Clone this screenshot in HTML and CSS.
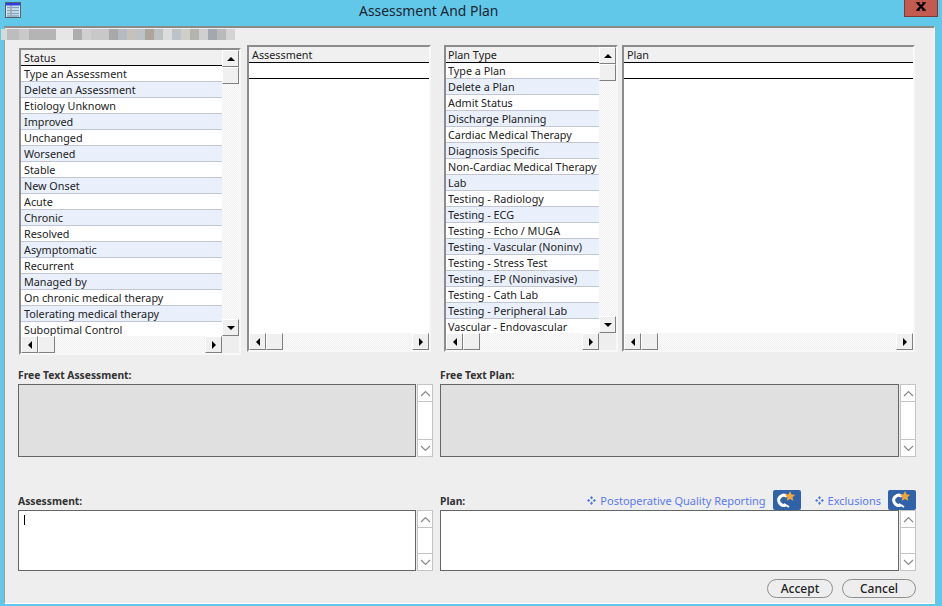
FILE: index.html
```html
<!DOCTYPE html>
<html lang="en">
<head>
    <meta charset="UTF-8">
    <title>Assessment And Plan</title>
    <link rel="stylesheet" href="styles.css">
</head>
<body>
    <div class="titlebar">
        <svg class="app-icon" width="16" height="16" viewBox="0 0 16 16">
            <rect x="0.5" y="0.5" width="15" height="15" fill="#dfe8f2" stroke="#55606c"/>
            <rect x="1" y="1" width="14" height="2.5" fill="#2f3fe0"/>
            <path d="M2 5.5h3M2 8.5h3M2 11.5h3M2 14h3M7 5.5h7M7 8.5h7M7 11.5h7M7 14h7" stroke="#7ea2c4" stroke-width="1.4"/>
            <path d="M6 3v12" stroke="#66707c"/>
        </svg>
        <div class="title">Assessment And Plan</div>
        <div class="close">
            <svg width="10" height="9" viewBox="0 0 10 9"><path d="M1.5 1l7 7M8.5 1l-7 7" stroke="#000" stroke-width="2.2"/><path d="M0 .8h4M6 .8h4M0 8.2h4M6 8.2h4" stroke="#000" stroke-width="1"/></svg>
        </div>
    </div>

    <div class="form">
        <div class="blurred"></div>

        <div class="lists">
            <div class="listbox status-box">
                <div class="list-body">
                    <div class="list-head">Status</div>
                    <div class="row">Type an Assessment</div>
                    <div class="row">Delete an Assessment</div>
                    <div class="row">Etiology Unknown</div>
                    <div class="row">Improved</div>
                    <div class="row">Unchanged</div>
                    <div class="row">Worsened</div>
                    <div class="row">Stable</div>
                    <div class="row">New Onset</div>
                    <div class="row">Acute</div>
                    <div class="row">Chronic</div>
                    <div class="row">Resolved</div>
                    <div class="row">Asymptomatic</div>
                    <div class="row">Recurrent</div>
                    <div class="row">Managed by</div>
                    <div class="row">On chronic medical therapy</div>
                    <div class="row">Tolerating medical therapy</div>
                    <div class="row">Suboptimal Control</div>
                </div>
                <div class="vscroll">
                    <div class="sbtn"><span class="arrow up"></span></div>
                    <div class="sbtn"></div>
                    <div class="strack"></div>
                    <div class="sbtn"><span class="arrow down"></span></div>
                </div>
                <div class="hscroll">
                    <div class="sbtn"><span class="arrow left"></span></div>
                    <div class="sbtn"></div>
                    <div class="strack"></div>
                    <div class="sbtn"><span class="arrow right"></span></div>
                </div>
            </div>

            <div class="listbox assess-box no-vbar">
                <div class="list-body">
                    <div class="list-head">Assessment</div>
                    <div class="row-empty"></div>
                </div>
                <div class="hscroll">
                    <div class="sbtn"><span class="arrow left"></span></div>
                    <div class="sbtn"></div>
                    <div class="strack"></div>
                    <div class="sbtn"><span class="arrow right"></span></div>
                </div>
            </div>

            <div class="listbox plantype-box">
                <div class="list-body">
                    <div class="list-head">Plan Type</div>
                    <div class="row">Type a Plan</div>
                    <div class="row">Delete a Plan</div>
                    <div class="row">Admit Status</div>
                    <div class="row">Discharge Planning</div>
                    <div class="row">Cardiac Medical Therapy</div>
                    <div class="row">Diagnosis Specific</div>
                    <div class="row">Non-Cardiac Medical Therapy</div>
                    <div class="row">Lab</div>
                    <div class="row">Testing - Radiology</div>
                    <div class="row">Testing - ECG</div>
                    <div class="row">Testing - Echo / MUGA</div>
                    <div class="row">Testing - Vascular (Noninv)</div>
                    <div class="row">Testing - Stress Test</div>
                    <div class="row">Testing - EP (Noninvasive)</div>
                    <div class="row">Testing - Cath Lab</div>
                    <div class="row">Testing - Peripheral Lab</div>
                    <div class="row">Vascular - Endovascular</div>
                </div>
                <div class="vscroll">
                    <div class="sbtn"><span class="arrow up"></span></div>
                    <div class="sbtn"></div>
                    <div class="strack"></div>
                    <div class="sbtn"><span class="arrow down"></span></div>
                </div>
                <div class="hscroll">
                    <div class="sbtn"><span class="arrow left"></span></div>
                    <div class="sbtn"></div>
                    <div class="strack"></div>
                    <div class="sbtn"><span class="arrow right"></span></div>
                </div>
            </div>

            <div class="listbox plan-box no-vbar">
                <div class="list-body">
                    <div class="list-head">Plan</div>
                    <div class="row-empty"></div>
                </div>
                <div class="hscroll">
                    <div class="sbtn"><span class="arrow left"></span></div>
                    <div class="sbtn"></div>
                    <div class="strack"></div>
                    <div class="sbtn"><span class="arrow right"></span></div>
                </div>
            </div>
        </div>

        <div class="text-row free-row">
            <div class="field">
                <div class="label">Free Text Assessment:</div>
                <div class="textbox disabled">
                    <div class="text-area"></div>
                    <div class="mini-scroll">
                        <div class="mini-btn"><svg width="11" height="7" viewBox="0 0 11 7"><path d="M1 6l4.5-4.5L10 6" fill="none" stroke="#8a8a8a" stroke-width="1.2"/></svg></div>
                        <div class="mini-track"></div>
                        <div class="mini-btn"><svg width="11" height="7" viewBox="0 0 11 7"><path d="M1 1l4.5 4.5L10 1" fill="none" stroke="#8a8a8a" stroke-width="1.2"/></svg></div>
                    </div>
                </div>
            </div>
            <div class="field">
                <div class="label">Free Text Plan:</div>
                <div class="textbox disabled">
                    <div class="text-area"></div>
                    <div class="mini-scroll">
                        <div class="mini-btn"><svg width="11" height="7" viewBox="0 0 11 7"><path d="M1 6l4.5-4.5L10 6" fill="none" stroke="#8a8a8a" stroke-width="1.2"/></svg></div>
                        <div class="mini-track"></div>
                        <div class="mini-btn"><svg width="11" height="7" viewBox="0 0 11 7"><path d="M1 1l4.5 4.5L10 1" fill="none" stroke="#8a8a8a" stroke-width="1.2"/></svg></div>
                    </div>
                </div>
            </div>
        </div>

        <div class="text-row entry-row">
            <div class="field">
                <div class="label">Assessment:</div>
                <div class="textbox">
                    <div class="text-area"><span class="caret"></span></div>
                    <div class="mini-scroll">
                        <div class="mini-btn"><svg width="11" height="7" viewBox="0 0 11 7"><path d="M1 6l4.5-4.5L10 6" fill="none" stroke="#8a8a8a" stroke-width="1.2"/></svg></div>
                        <div class="mini-track"></div>
                        <div class="mini-btn"><svg width="11" height="7" viewBox="0 0 11 7"><path d="M1 1l4.5 4.5L10 1" fill="none" stroke="#8a8a8a" stroke-width="1.2"/></svg></div>
                    </div>
                </div>
            </div>
            <div class="field">
                <div class="label-line">
                    <div class="label">Plan:</div>
                    <div class="links">
                        <svg class="bullet" width="9" height="9" viewBox="0 0 9 9"><path d="M4.5 0l1.5 1.7-1.5 1.7L3 1.7zM1.7 3L3.3 4.5 1.7 6 0 4.5zM7.3 3L9 4.5 7.3 6 5.7 4.5zM4.5 5.6L6 7.3 4.5 9 3 7.3z" fill="#4d7be0"/></svg>
                        <a class="link">Postoperative Quality Reporting</a>
                        <svg class="badge" width="28" height="20" viewBox="0 0 28 20">
                            <rect width="28" height="20" rx="2" fill="#2f62a8"/>
                            <path d="M14 6.5A5 5 0 1 0 12.5 15" fill="none" stroke="#fff" stroke-width="3"/>
                            <path d="M11 14l5 3" stroke="#fff" stroke-width="2"/>
                            <path d="M17 1l1.6 3.4 3.6.4-2.7 2.4.8 3.6-3.3-1.9-3.3 1.9.8-3.6-2.7-2.4 3.6-.4z" fill="#f5a733"/>
                        </svg>
                        <svg class="bullet second" width="9" height="9" viewBox="0 0 9 9"><path d="M4.5 0l1.5 1.7-1.5 1.7L3 1.7zM1.7 3L3.3 4.5 1.7 6 0 4.5zM7.3 3L9 4.5 7.3 6 5.7 4.5zM4.5 5.6L6 7.3 4.5 9 3 7.3z" fill="#4d7be0"/></svg>
                        <a class="link">Exclusions</a>
                        <svg class="badge" width="28" height="20" viewBox="0 0 28 20">
                            <rect width="28" height="20" rx="2" fill="#2f62a8"/>
                            <path d="M14 6.5A5 5 0 1 0 12.5 15" fill="none" stroke="#fff" stroke-width="3"/>
                            <path d="M11 14l5 3" stroke="#fff" stroke-width="2"/>
                            <path d="M17 1l1.6 3.4 3.6.4-2.7 2.4.8 3.6-3.3-1.9-3.3 1.9.8-3.6-2.7-2.4 3.6-.4z" fill="#f5a733"/>
                        </svg>
                    </div>
                </div>
                <div class="textbox">
                    <div class="text-area"></div>
                    <div class="mini-scroll">
                        <div class="mini-btn"><svg width="11" height="7" viewBox="0 0 11 7"><path d="M1 6l4.5-4.5L10 6" fill="none" stroke="#8a8a8a" stroke-width="1.2"/></svg></div>
                        <div class="mini-track"></div>
                        <div class="mini-btn"><svg width="11" height="7" viewBox="0 0 11 7"><path d="M1 1l4.5 4.5L10 1" fill="none" stroke="#8a8a8a" stroke-width="1.2"/></svg></div>
                    </div>
                </div>
            </div>
        </div>

        <div class="buttons">
            <button class="pill accept">Accept</button>
            <button class="pill cancel">Cancel</button>
        </div>
    </div>
</body>
</html>
```

FILE: styles.css
```css
html, body {
    margin: 0;
    padding: 0;
}
body {
    width: 942px;
    height: 606px;
    overflow: hidden;
    background: #62c8ea;
    font-family: "Noto Sans", sans-serif;
    font-size: 10.8px;
    color: #222;
}

.titlebar {
    position: relative;
    height: 26px;
}
.app-icon {
    position: absolute;
    left: 5px;
    top: 2px;
}
.title {
    position: absolute;
    left: 359px;
    top: 1px;
    font-size: 13.9px;
    line-height: 20px;
    color: #1c2530;
}
.close {
    position: absolute;
    left: 904px;
    top: 0;
    display: flex;
    justify-content: center;
    width: 34px;
    height: 17px;
    box-sizing: border-box;
    padding-top: 2px;
    border: 1px solid #7c3a36;
    border-top: none;
    background: #c35a50;
}

.form {
    position: relative;
    width: 931px;
    height: 578px;
    margin-left: 4px;
    box-sizing: border-box;
    background: #eeeeee;
    border-top: 2px solid #8a8a8a;
    border-left: 1px solid #a0a0a0;
    border-right: 1px solid #fff;
    border-bottom: 1px solid #fff;
}
.blurred {
    position: absolute;
    left: -4px;
    top: 1px;
    width: 234px;
    height: 11px;
    background: linear-gradient(90deg,
        #d2dbdb 0 6px, #bdbdbd 6px 18px, #c9c9c9 18px 28px, #b4b4b4 28px 55px,
        #e6e6e6 55px 72px, #adadad 72px 81px, #d0d0d0 81px 90px, #c8c8c8 90px 108px,
        #a8a8a8 108px 117px, #b4bac2 117px 126px, #c6c2bb 126px 135px, #bcc2c6 135px 144px,
        #aea49c 144px 153px, #bcc1c4 153px 162px, #dcdcdc 162px 171px, #bcc3c6 171px 180px,
        #cfcfca 180px 189px, #b4b4ae 189px 198px, #cfcfcf 198px 207px, #a2a8ae 207px 216px,
        #bababa 216px 225px, #d4d4d4 225px 234px);
}

.lists {
    display: flex;
    align-items: flex-start;
    margin: 17px 0 0 14px;
}
.listbox {
    display: grid;
    grid-template-columns: 1fr 17px;
    grid-template-rows: 1fr 17px;
    box-sizing: border-box;
    height: 307px;
    border: 2px solid;
    border-color: #8c8c8c #f8f8f8 #f8f8f8 #8c8c8c;
    background: #eeeeee;
}
.status-box {
    width: 222px;
    margin: 3px 6px 0 0;
}
.assess-box {
    width: 184px;
    margin-right: 13px;
}
.plantype-box {
    width: 174px;
    margin-right: 4px;
}
.plan-box {
    width: 293px;
}
.no-vbar {
    grid-template-columns: 1fr;
}

.list-body {
    overflow: hidden;
    min-height: 0;
    background: #fff;
}
.list-head {
    height: 15px;
    line-height: 15px;
    padding-left: 2px;
    background: #f0f0f0;
    border-bottom: 1px solid #000;
}
.status-box .list-head,
.status-box .row,
.assess-box .list-head,
.plan-box .list-head {
    padding-left: 3px;
}
.row {
    height: 15px;
    line-height: 15px;
    padding-left: 2px;
    white-space: nowrap;
    border-bottom: 1px solid #c2c6d4;
}
.row:nth-child(odd) {
    background: #e9effb;
}
.row-empty {
    height: 15px;
    border-bottom: 1px solid #000;
}

.vscroll {
    display: flex;
    flex-direction: column;
    min-height: 0;
}
.hscroll {
    display: flex;
    grid-column: 1;
}
.sbtn {
    flex: 0 0 auto;
    width: 17px;
    height: 17px;
    box-sizing: border-box;
    display: flex;
    align-items: center;
    justify-content: center;
    background: #f0f0f0;
    border: 1px solid;
    border-color: #fff #808080 #808080 #fff;
}
.strack {
    flex: 1;
    background-color: #f4f4f4;
    background-image: repeating-conic-gradient(#f0f0f0 0 25%, #fcfcfc 0 50%);
    background-size: 2px 2px;
}
.arrow {
    width: 0;
    height: 0;
    border: 4px solid transparent;
}
.arrow.up {
    border-bottom-color: #000;
    border-top-width: 0;
}
.arrow.down {
    border-top-color: #000;
    border-bottom-width: 0;
}
.arrow.left {
    border-right-color: #000;
    border-left-width: 0;
}
.arrow.right {
    border-left-color: #000;
    border-right-width: 0;
}

.text-row {
    display: grid;
    grid-template-columns: 415px 476px;
    column-gap: 7px;
    margin-left: 13px;
}
.free-row {
    margin-top: 14px;
}
.entry-row {
    margin-top: 38px;
}
.label {
    height: 15px;
    line-height: 13px;
    font-size: 10.3px;
    font-weight: 700;
    color: #333;
}
.label-line {
    display: flex;
    justify-content: space-between;
    height: 15px;
}
.textbox {
    display: flex;
}
.free-row .textbox {
    height: 73px;
}
.entry-row .textbox {
    height: 61px;
}
.text-area {
    flex: 1;
    box-sizing: border-box;
    background: #fff;
    border: 1px solid #666;
    padding: 4px 0 0 5px;
}
.disabled .text-area {
    background: #e0e0e0;
}
.caret {
    display: block;
    width: 1px;
    height: 10px;
    background: #000;
}
.mini-scroll {
    display: flex;
    flex-direction: column;
    width: 16px;
    margin-left: 1px;
    box-sizing: border-box;
    border: 1px solid #c4c4c4;
    background: #fff;
}
.mini-btn {
    display: flex;
    align-items: center;
    justify-content: center;
    height: 16px;
}
.mini-btn:first-child {
    border-bottom: 1px solid #c4c4c4;
}
.mini-btn:last-child {
    border-top: 1px solid #c4c4c4;
}
.mini-track {
    flex: 1;
}

.links {
    position: relative;
    top: -5px;
    display: flex;
    align-items: center;
    height: 20px;
}
.link {
    font-size: 11px;
    color: #5a7af0;
    margin: 0 7px 0 4px;
}
.bullet {
    flex: none;
}
.bullet.second {
    margin-left: 14px;
}
.badge {
    flex: none;
}

.buttons {
    display: flex;
    justify-content: flex-end;
    gap: 9px;
    margin: 8px 18px 0 0;
}
.pill {
    height: 19px;
    padding: 0;
    border: 1px solid #8f8f8f;
    border-radius: 10px;
    background: #eeeeee;
    font: 500 12px "Noto Sans", sans-serif;
    color: #222;
}
.accept {
    width: 66px;
}
.cancel {
    width: 74px;
}
```
